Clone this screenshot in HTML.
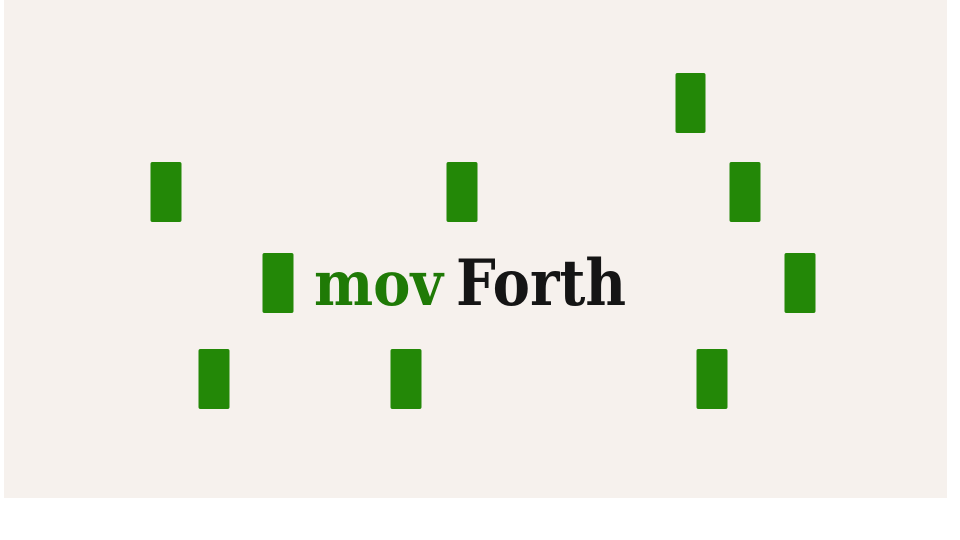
<!DOCTYPE html>
<html><head><meta charset="utf-8"><style>
html,body{margin:0;padding:0;background:#fff;width:960px;height:540px;overflow:hidden}
</style></head><body>
<svg width="960" height="540" viewBox="0 0 960 540" xmlns="http://www.w3.org/2000/svg">
<rect x="4" y="0" width="943" height="498" fill="#f6f1ed"/>
<g fill="#238807">
<rect x="675.5" y="73" width="30" height="60" rx="2"/>
<rect x="150.5" y="162" width="31" height="60" rx="2"/>
<rect x="446.5" y="162" width="31" height="60" rx="2"/>
<rect x="729.5" y="162" width="31" height="60" rx="2"/>
<rect x="262.5" y="253" width="31" height="60" rx="2"/>
<rect x="784.5" y="253" width="31" height="60" rx="2"/>
<rect x="198.5" y="349" width="31" height="60" rx="2"/>
<rect x="390.5" y="349" width="31" height="60" rx="2"/>
<rect x="696.5" y="349" width="31" height="60" rx="2"/>
</g>
<text x="314" y="305" font-family="DejaVu Serif, Liberation Serif, serif" font-weight="bold" font-size="62" fill="#1f7a06" textLength="129" lengthAdjust="spacingAndGlyphs">mov</text>
<text x="456" y="305" font-family="DejaVu Serif, Liberation Serif, serif" font-weight="bold" font-size="64" fill="#151515" textLength="170" lengthAdjust="spacingAndGlyphs">Forth</text>
</svg>
</body></html>
